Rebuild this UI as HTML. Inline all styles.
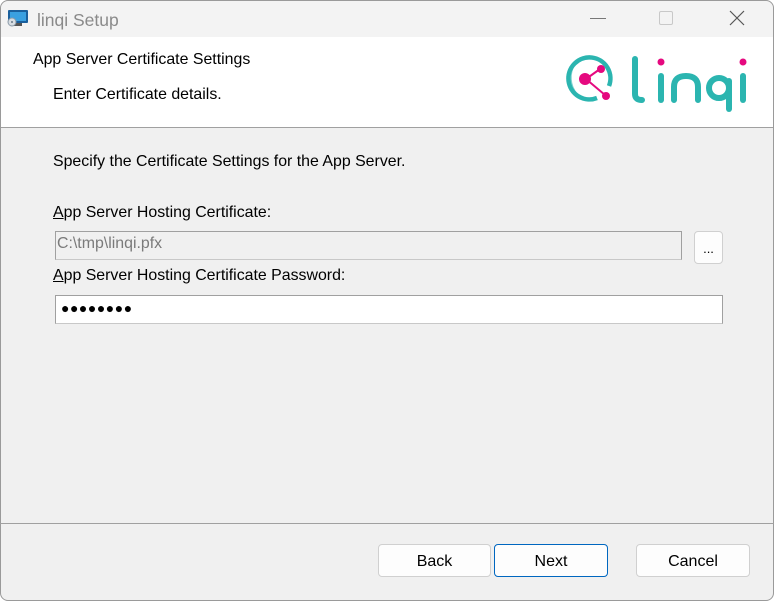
<!DOCTYPE html>
<html><head><style>
*{margin:0;padding:0;box-sizing:border-box}
body{width:774px;height:601px;background:#fff;font-family:"Liberation Sans",sans-serif;position:relative;overflow:hidden;color:#000}
.win{position:absolute;left:0;top:0;width:774px;height:601px;border-radius:8px;background:#f0f0f0;overflow:hidden;box-shadow:inset 0 0 0 1px #9a9a9a}
.title{position:absolute;left:1px;top:1px;width:772px;height:36px;background:#f3f3f3;border-radius:8px 8px 0 0}
.header{position:absolute;left:1px;top:37px;width:772px;height:91px;background:#fff;border-bottom:1px solid #a0a0a0}
.t{position:absolute;font-size:15.9px;white-space:nowrap}
.field{position:absolute;border:1px solid #a0a0a0;border-bottom-color:#c8c8c8}
.btn{position:absolute;top:544px;height:33px;border:1px solid #d0d0d0;border-radius:4px;background:#fdfdfd;font-size:16px;text-align:center;line-height:33px}
</style></head><body>
<div class="win">
<div class="title">
 <svg style="position:absolute;left:6px;top:8px" width="22" height="18" viewBox="0 0 22 18"><rect x="1" y="1" width="20" height="13" rx="1" fill="#1a5f9c"/><rect x="3" y="3" width="16" height="9" fill="#3aa0e0"/><rect x="7" y="14" width="8" height="3" fill="#555"/><circle cx="5" cy="13" r="4" fill="#d8dde2" stroke="#8a9aa8"/><circle cx="5" cy="13" r="1" fill="#6a7a88"/></svg>
 <div class="t" style="left:36px;top:9px;font-size:17.5px;color:#8a8a8a">linqi Setup</div>
 <div style="position:absolute;left:589px;top:17px;width:16px;height:1px;background:#777"></div>
 <div style="position:absolute;left:658px;top:10px;width:14px;height:14px;border:1px solid #c8c8c8;border-radius:2px"></div>
 <svg style="position:absolute;left:728px;top:9px" width="16" height="16"><path d="M1 1L15 15M15 1L1 15" stroke="#555" stroke-width="1.2"/></svg>
</div>
<div class="header">
 <div class="t" style="left:32px;top:14px">App Server Certificate Settings</div>
 <div class="t" style="left:52px;top:49px">Enter Certificate details.</div>
 <svg style="position:absolute;left:564px;top:12px" width="185" height="64" viewBox="0 0 185 64">
  <path d="M32 49 A21 21 0 1 1 44 37" fill="none" stroke="#2bb5b0" stroke-width="4.5"/>
  <path d="M12 45 A25 25 0 0 1 10 15" fill="none" stroke="#2bb5b0" stroke-width="1.5" opacity=".6"/>
  <line x1="21" y1="30" x2="35" y2="20" stroke="#e5097f" stroke-width="2"/>
  <line x1="21" y1="30" x2="40" y2="46" stroke="#e5097f" stroke-width="2"/>
  <circle cx="20" cy="30" r="6" fill="#e5097f"/><circle cx="36" cy="20" r="4" fill="#e5097f"/><circle cx="41" cy="47" r="4" fill="#e5097f"/>
  <path d="M70 10 V45 Q70 51 77 51" fill="none" stroke="#2bb5b0" stroke-width="6" stroke-linecap="round"/>
  <line x1="96" y1="27" x2="96" y2="51" stroke="#2bb5b0" stroke-width="6" stroke-linecap="round"/>
  <circle cx="96" cy="13" r="3.5" fill="#e5097f"/>
  <path d="M109 51 V38 Q109 27 121 27 Q133 27 133 38 V51" fill="none" stroke="#2bb5b0" stroke-width="6" stroke-linecap="round"/>
  <circle cx="154" cy="39" r="10" fill="none" stroke="#2bb5b0" stroke-width="6"/>
  <line x1="164" y1="32" x2="164" y2="60" stroke="#2bb5b0" stroke-width="6" stroke-linecap="round"/>
  <line x1="178" y1="27" x2="178" y2="51" stroke="#2bb5b0" stroke-width="6" stroke-linecap="round"/>
  <circle cx="178" cy="13" r="3.5" fill="#e5097f"/>
 </svg>
</div>
<div class="t" style="left:53px;top:153px">Specify the Certificate Settings for the App Server.</div>
<div class="t" style="left:53px;top:204px"><u>A</u>pp Server Hosting Certificate:</div>
<div class="field" style="left:55px;top:231px;width:627px;height:29px;background:#f0f0f0"></div>
<div class="t" style="left:57px;top:235px;color:#7a7a7a">C:\tmp\linqi.pfx</div>
<div class="btn" style="left:694px;top:231px;width:29px;height:33px;line-height:33px;font-size:13px">...</div>
<div class="t" style="left:53px;top:267px"><u>A</u>pp Server Hosting Certificate Password:</div>
<div class="field" style="left:55px;top:295px;width:668px;height:29px;background:#fff"></div>
<div class="t" style="left:61px;top:300px;font-size:14px;letter-spacing:0.5px">●●●●●●●●</div>
<div style="position:absolute;left:0;top:523px;width:100%;height:1px;background:#a0a0a0"></div>
<div class="btn" style="left:378px;width:113px">Back</div>
<div class="btn" style="left:494px;width:114px;border-color:#0067c0">Next</div>
<div class="btn" style="left:636px;width:114px">Cancel</div>
</div>
</body></html>
